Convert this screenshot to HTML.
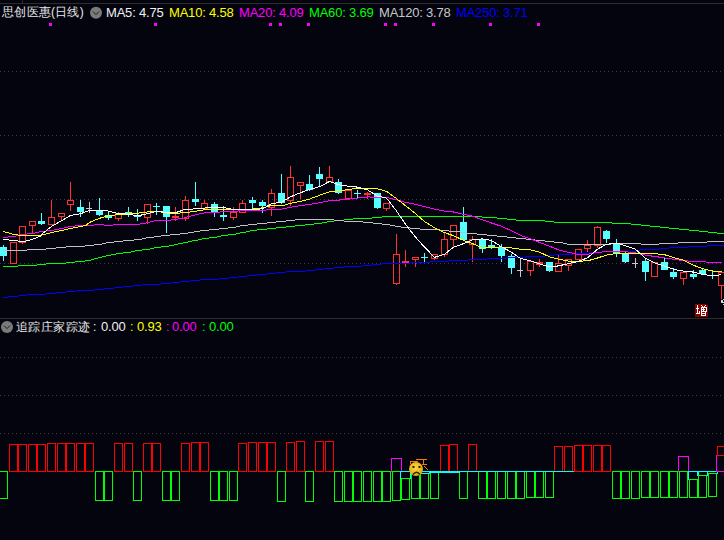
<!DOCTYPE html>
<html><head><meta charset="utf-8"><style>
html,body{margin:0;padding:0;background:#04040e;width:724px;height:540px;overflow:hidden;}
body{position:relative;font-family:"Liberation Sans",sans-serif;}
svg{position:absolute;left:0;top:0;}
.t{position:absolute;white-space:nowrap;font-size:13px;line-height:14px;letter-spacing:-0.2px}
.ic{position:absolute;width:12px;height:12px;border-radius:50%;background:#6c6c6c;}
</style></head><body>
<svg width="724" height="540" shape-rendering="crispEdges">
<rect x="0" y="3" width="724" height="1" fill="#2c2c2c"/>
<rect x="22" y="0" width="1" height="3" fill="#2c2c2c"/>
<rect x="0" y="318" width="724" height="1" fill="#2e2e2e"/>
<rect x="49" y="23" width="3" height="3" fill="#ff00ff"/><rect x="154" y="23" width="3" height="3" fill="#ff00ff"/><rect x="269" y="23" width="3" height="3" fill="#ff00ff"/><rect x="279" y="23" width="3" height="3" fill="#ff00ff"/><rect x="307" y="23" width="3" height="3" fill="#ff00ff"/><rect x="384" y="23" width="3" height="3" fill="#ff00ff"/><rect x="394" y="23" width="3" height="3" fill="#ff00ff"/><rect x="432" y="23" width="3" height="3" fill="#ff00ff"/><rect x="489" y="23" width="3" height="3" fill="#ff00ff"/><rect x="537" y="23" width="3" height="3" fill="#ff00ff"/>
<line x1="0" y1="71.5" x2="724" y2="71.5" stroke="#3c3c3c" stroke-width="1" stroke-dasharray="1 3"/>
<line x1="0" y1="135.5" x2="724" y2="135.5" stroke="#3c3c3c" stroke-width="1" stroke-dasharray="1 3"/>
<line x1="0" y1="199.5" x2="724" y2="199.5" stroke="#3c3c3c" stroke-width="1" stroke-dasharray="1 3"/>
<line x1="0" y1="263.5" x2="724" y2="263.5" stroke="#3c3c3c" stroke-width="1" stroke-dasharray="1 3"/>
<line x1="0" y1="357.5" x2="724" y2="357.5" stroke="#3c3c3c" stroke-width="1" stroke-dasharray="1 3"/>
<line x1="0" y1="395.5" x2="724" y2="395.5" stroke="#3c3c3c" stroke-width="1" stroke-dasharray="1 3"/>
<line x1="0" y1="433.5" x2="724" y2="433.5" stroke="#3c3c3c" stroke-width="1" stroke-dasharray="1 3"/>
<rect x="0" y="247" width="7" height="9" fill="#54ffff"/>
<rect x="3" y="245" width="1" height="16" fill="#54ffff"/>
<rect x="10" y="242" width="7" height="1" fill="#ff3232"/>
<rect x="10" y="263" width="7" height="1" fill="#ff3232"/>
<rect x="10" y="242" width="1" height="22" fill="#ff3232"/>
<rect x="16" y="242" width="1" height="22" fill="#ff3232"/>
<rect x="19" y="226" width="7" height="1" fill="#ff3232"/>
<rect x="19" y="242" width="7" height="1" fill="#ff3232"/>
<rect x="19" y="226" width="1" height="17" fill="#ff3232"/>
<rect x="25" y="226" width="1" height="17" fill="#ff3232"/>
<rect x="22" y="243" width="1" height="1" fill="#ff3232"/>
<rect x="29" y="221" width="7" height="1" fill="#ff3232"/>
<rect x="29" y="225" width="7" height="1" fill="#ff3232"/>
<rect x="29" y="221" width="1" height="5" fill="#ff3232"/>
<rect x="35" y="221" width="1" height="5" fill="#ff3232"/>
<rect x="32" y="226" width="1" height="7" fill="#ff3232"/>
<rect x="38" y="221" width="7" height="3" fill="#54ffff"/>
<rect x="41" y="213" width="1" height="12" fill="#54ffff"/>
<rect x="48" y="217" width="7" height="1" fill="#ff3232"/>
<rect x="48" y="224" width="7" height="1" fill="#ff3232"/>
<rect x="48" y="217" width="1" height="8" fill="#ff3232"/>
<rect x="54" y="217" width="1" height="8" fill="#ff3232"/>
<rect x="51" y="200" width="1" height="17" fill="#ff3232"/>
<rect x="58" y="213" width="7" height="1" fill="#ff3232"/>
<rect x="58" y="216" width="7" height="1" fill="#ff3232"/>
<rect x="58" y="213" width="1" height="4" fill="#ff3232"/>
<rect x="64" y="213" width="1" height="4" fill="#ff3232"/>
<rect x="61" y="217" width="1" height="4" fill="#ff3232"/>
<rect x="67" y="200" width="7" height="1" fill="#ff3232"/>
<rect x="67" y="204" width="7" height="1" fill="#ff3232"/>
<rect x="67" y="200" width="1" height="5" fill="#ff3232"/>
<rect x="73" y="200" width="1" height="5" fill="#ff3232"/>
<rect x="70" y="182" width="1" height="18" fill="#ff3232"/>
<rect x="70" y="205" width="1" height="6" fill="#ff3232"/>
<rect x="77" y="207" width="7" height="5" fill="#54ffff"/>
<rect x="80" y="200" width="1" height="17" fill="#54ffff"/>
<rect x="86" y="208" width="6" height="1" fill="#c8c8c8"/>
<rect x="89" y="202" width="1" height="11" fill="#c8c8c8"/>
<rect x="96" y="210" width="7" height="5" fill="#54ffff"/>
<rect x="99" y="198" width="1" height="18" fill="#54ffff"/>
<rect x="105" y="215" width="7" height="3" fill="#54ffff"/>
<rect x="108" y="212" width="1" height="8" fill="#54ffff"/>
<rect x="115" y="213" width="7" height="1" fill="#ff3232"/>
<rect x="115" y="218" width="7" height="1" fill="#ff3232"/>
<rect x="115" y="213" width="1" height="6" fill="#ff3232"/>
<rect x="121" y="213" width="1" height="6" fill="#ff3232"/>
<rect x="118" y="212" width="1" height="1" fill="#ff3232"/>
<rect x="118" y="219" width="1" height="2" fill="#ff3232"/>
<rect x="125" y="212" width="7" height="2" fill="#54ffff"/>
<rect x="128" y="207" width="1" height="10" fill="#54ffff"/>
<rect x="134" y="215" width="7" height="2" fill="#54ffff"/>
<rect x="137" y="209" width="1" height="12" fill="#54ffff"/>
<rect x="144" y="204" width="7" height="1" fill="#ff3232"/>
<rect x="144" y="217" width="7" height="1" fill="#ff3232"/>
<rect x="144" y="204" width="1" height="14" fill="#ff3232"/>
<rect x="150" y="204" width="1" height="14" fill="#ff3232"/>
<rect x="147" y="218" width="1" height="6" fill="#ff3232"/>
<rect x="153" y="206" width="7" height="1" fill="#54ffff"/>
<rect x="156" y="203" width="1" height="12" fill="#54ffff"/>
<rect x="163" y="206" width="7" height="11" fill="#54ffff"/>
<rect x="166" y="206" width="1" height="27" fill="#54ffff"/>
<rect x="172" y="216" width="7" height="2" fill="#ff3232"/>
<rect x="175" y="207" width="1" height="14" fill="#ff3232"/>
<rect x="182" y="200" width="7" height="1" fill="#ff3232"/>
<rect x="182" y="218" width="7" height="1" fill="#ff3232"/>
<rect x="182" y="200" width="1" height="19" fill="#ff3232"/>
<rect x="188" y="200" width="1" height="19" fill="#ff3232"/>
<rect x="185" y="196" width="1" height="4" fill="#ff3232"/>
<rect x="185" y="219" width="1" height="2" fill="#ff3232"/>
<rect x="192" y="199" width="7" height="3" fill="#54ffff"/>
<rect x="195" y="182" width="1" height="24" fill="#54ffff"/>
<rect x="201" y="203" width="7" height="1" fill="#ff3232"/>
<rect x="201" y="208" width="7" height="1" fill="#ff3232"/>
<rect x="201" y="203" width="1" height="6" fill="#ff3232"/>
<rect x="207" y="203" width="1" height="6" fill="#ff3232"/>
<rect x="204" y="200" width="1" height="3" fill="#ff3232"/>
<rect x="211" y="204" width="7" height="8" fill="#54ffff"/>
<rect x="214" y="202" width="1" height="15" fill="#54ffff"/>
<rect x="220" y="215" width="7" height="2" fill="#54ffff"/>
<rect x="223" y="206" width="1" height="15" fill="#54ffff"/>
<rect x="230" y="212" width="7" height="1" fill="#ff3232"/>
<rect x="230" y="217" width="7" height="1" fill="#ff3232"/>
<rect x="230" y="212" width="1" height="6" fill="#ff3232"/>
<rect x="236" y="212" width="1" height="6" fill="#ff3232"/>
<rect x="233" y="207" width="1" height="5" fill="#ff3232"/>
<rect x="233" y="218" width="1" height="2" fill="#ff3232"/>
<rect x="239" y="203" width="7" height="1" fill="#ff3232"/>
<rect x="239" y="212" width="7" height="1" fill="#ff3232"/>
<rect x="239" y="203" width="1" height="10" fill="#ff3232"/>
<rect x="245" y="203" width="1" height="10" fill="#ff3232"/>
<rect x="242" y="200" width="1" height="3" fill="#ff3232"/>
<rect x="249" y="200" width="7" height="3" fill="#54ffff"/>
<rect x="252" y="197" width="1" height="11" fill="#54ffff"/>
<rect x="259" y="202" width="7" height="4" fill="#54ffff"/>
<rect x="262" y="200" width="1" height="13" fill="#54ffff"/>
<rect x="268" y="193" width="7" height="1" fill="#ff3232"/>
<rect x="268" y="207" width="7" height="1" fill="#ff3232"/>
<rect x="268" y="193" width="1" height="15" fill="#ff3232"/>
<rect x="274" y="193" width="1" height="15" fill="#ff3232"/>
<rect x="271" y="189" width="1" height="4" fill="#ff3232"/>
<rect x="271" y="208" width="1" height="8" fill="#ff3232"/>
<rect x="278" y="193" width="7" height="10" fill="#54ffff"/>
<rect x="281" y="174" width="1" height="30" fill="#54ffff"/>
<rect x="287" y="177" width="7" height="1" fill="#ff3232"/>
<rect x="287" y="200" width="7" height="1" fill="#ff3232"/>
<rect x="287" y="177" width="1" height="24" fill="#ff3232"/>
<rect x="293" y="177" width="1" height="24" fill="#ff3232"/>
<rect x="290" y="166" width="1" height="11" fill="#ff3232"/>
<rect x="290" y="201" width="1" height="5" fill="#ff3232"/>
<rect x="297" y="182" width="7" height="1" fill="#ff3232"/>
<rect x="297" y="185" width="7" height="1" fill="#ff3232"/>
<rect x="297" y="182" width="1" height="4" fill="#ff3232"/>
<rect x="303" y="182" width="1" height="4" fill="#ff3232"/>
<rect x="300" y="186" width="1" height="13" fill="#ff3232"/>
<rect x="306" y="184" width="7" height="6" fill="#54ffff"/>
<rect x="309" y="175" width="1" height="16" fill="#54ffff"/>
<rect x="316" y="174" width="7" height="5" fill="#54ffff"/>
<rect x="319" y="167" width="1" height="19" fill="#54ffff"/>
<rect x="326" y="177" width="7" height="1" fill="#ff3232"/>
<rect x="326" y="181" width="7" height="1" fill="#ff3232"/>
<rect x="326" y="177" width="1" height="5" fill="#ff3232"/>
<rect x="332" y="177" width="1" height="5" fill="#ff3232"/>
<rect x="329" y="166" width="1" height="11" fill="#ff3232"/>
<rect x="335" y="182" width="7" height="11" fill="#54ffff"/>
<rect x="338" y="179" width="1" height="15" fill="#54ffff"/>
<rect x="345" y="190" width="7" height="1" fill="#ff3232"/>
<rect x="345" y="198" width="7" height="1" fill="#ff3232"/>
<rect x="345" y="190" width="1" height="9" fill="#ff3232"/>
<rect x="351" y="190" width="1" height="9" fill="#ff3232"/>
<rect x="354" y="193" width="7" height="1" fill="#54ffff"/>
<rect x="357" y="190" width="1" height="8" fill="#54ffff"/>
<rect x="364" y="193" width="7" height="2" fill="#ff3232"/>
<rect x="367" y="192" width="1" height="7" fill="#ff3232"/>
<rect x="374" y="193" width="7" height="15" fill="#54ffff"/>
<rect x="377" y="193" width="1" height="16" fill="#54ffff"/>
<rect x="383" y="203" width="7" height="1" fill="#ff3232"/>
<rect x="383" y="208" width="7" height="1" fill="#ff3232"/>
<rect x="383" y="203" width="1" height="6" fill="#ff3232"/>
<rect x="389" y="203" width="1" height="6" fill="#ff3232"/>
<rect x="386" y="209" width="1" height="2" fill="#ff3232"/>
<rect x="393" y="254" width="7" height="1" fill="#ff3232"/>
<rect x="393" y="283" width="7" height="1" fill="#ff3232"/>
<rect x="393" y="254" width="1" height="30" fill="#ff3232"/>
<rect x="399" y="254" width="1" height="30" fill="#ff3232"/>
<rect x="396" y="234" width="1" height="20" fill="#ff3232"/>
<rect x="396" y="284" width="1" height="1" fill="#ff3232"/>
<rect x="402" y="261" width="7" height="3" fill="#ff3232"/>
<rect x="405" y="250" width="1" height="17" fill="#ff3232"/>
<rect x="412" y="257" width="7" height="1" fill="#ff3232"/>
<rect x="412" y="259" width="7" height="1" fill="#ff3232"/>
<rect x="412" y="257" width="1" height="3" fill="#ff3232"/>
<rect x="418" y="257" width="1" height="3" fill="#ff3232"/>
<rect x="415" y="260" width="1" height="7" fill="#ff3232"/>
<rect x="421" y="257" width="7" height="1" fill="#54ffff"/>
<rect x="424" y="253" width="1" height="9" fill="#54ffff"/>
<rect x="431" y="254" width="7" height="1" fill="#ff3232"/>
<rect x="431" y="258" width="7" height="1" fill="#ff3232"/>
<rect x="431" y="254" width="1" height="5" fill="#ff3232"/>
<rect x="437" y="254" width="1" height="5" fill="#ff3232"/>
<rect x="434" y="259" width="1" height="1" fill="#ff3232"/>
<rect x="441" y="239" width="7" height="1" fill="#ff3232"/>
<rect x="441" y="254" width="7" height="1" fill="#ff3232"/>
<rect x="441" y="239" width="1" height="16" fill="#ff3232"/>
<rect x="447" y="239" width="1" height="16" fill="#ff3232"/>
<rect x="444" y="233" width="1" height="6" fill="#ff3232"/>
<rect x="444" y="255" width="1" height="2" fill="#ff3232"/>
<rect x="450" y="225" width="7" height="1" fill="#ff3232"/>
<rect x="450" y="239" width="7" height="1" fill="#ff3232"/>
<rect x="450" y="225" width="1" height="15" fill="#ff3232"/>
<rect x="456" y="225" width="1" height="15" fill="#ff3232"/>
<rect x="453" y="240" width="1" height="7" fill="#ff3232"/>
<rect x="460" y="222" width="7" height="18" fill="#54ffff"/>
<rect x="463" y="207" width="1" height="34" fill="#54ffff"/>
<rect x="469" y="239" width="7" height="1" fill="#ff3232"/>
<rect x="469" y="244" width="7" height="1" fill="#ff3232"/>
<rect x="469" y="239" width="1" height="6" fill="#ff3232"/>
<rect x="475" y="239" width="1" height="6" fill="#ff3232"/>
<rect x="472" y="236" width="1" height="3" fill="#ff3232"/>
<rect x="472" y="245" width="1" height="17" fill="#ff3232"/>
<rect x="479" y="239" width="7" height="10" fill="#54ffff"/>
<rect x="482" y="239" width="1" height="14" fill="#54ffff"/>
<rect x="488" y="245" width="7" height="2" fill="#54ffff"/>
<rect x="491" y="239" width="1" height="10" fill="#54ffff"/>
<rect x="498" y="247" width="7" height="9" fill="#54ffff"/>
<rect x="501" y="244" width="1" height="18" fill="#54ffff"/>
<rect x="508" y="256" width="7" height="12" fill="#54ffff"/>
<rect x="511" y="254" width="1" height="20" fill="#54ffff"/>
<rect x="517" y="270" width="6" height="1" fill="#c8c8c8"/>
<rect x="520" y="258" width="1" height="19" fill="#c8c8c8"/>
<rect x="527" y="261" width="7" height="1" fill="#ff3232"/>
<rect x="527" y="270" width="7" height="1" fill="#ff3232"/>
<rect x="527" y="261" width="1" height="10" fill="#ff3232"/>
<rect x="533" y="261" width="1" height="10" fill="#ff3232"/>
<rect x="530" y="271" width="1" height="5" fill="#ff3232"/>
<rect x="536" y="262" width="7" height="3" fill="#ff3232"/>
<rect x="539" y="259" width="1" height="8" fill="#ff3232"/>
<rect x="546" y="262" width="7" height="9" fill="#54ffff"/>
<rect x="549" y="262" width="1" height="10" fill="#54ffff"/>
<rect x="555" y="263" width="7" height="1" fill="#ff3232"/>
<rect x="555" y="271" width="7" height="1" fill="#ff3232"/>
<rect x="555" y="263" width="1" height="9" fill="#ff3232"/>
<rect x="561" y="263" width="1" height="9" fill="#ff3232"/>
<rect x="558" y="255" width="1" height="8" fill="#ff3232"/>
<rect x="565" y="259" width="7" height="1" fill="#ff3232"/>
<rect x="565" y="265" width="7" height="1" fill="#ff3232"/>
<rect x="565" y="259" width="1" height="7" fill="#ff3232"/>
<rect x="571" y="259" width="1" height="7" fill="#ff3232"/>
<rect x="568" y="266" width="1" height="5" fill="#ff3232"/>
<rect x="575" y="249" width="7" height="1" fill="#ff3232"/>
<rect x="575" y="259" width="7" height="1" fill="#ff3232"/>
<rect x="575" y="249" width="1" height="11" fill="#ff3232"/>
<rect x="581" y="249" width="1" height="11" fill="#ff3232"/>
<rect x="584" y="245" width="7" height="1" fill="#ff3232"/>
<rect x="584" y="248" width="7" height="1" fill="#ff3232"/>
<rect x="584" y="245" width="1" height="4" fill="#ff3232"/>
<rect x="590" y="245" width="1" height="4" fill="#ff3232"/>
<rect x="587" y="240" width="1" height="5" fill="#ff3232"/>
<rect x="587" y="249" width="1" height="3" fill="#ff3232"/>
<rect x="594" y="227" width="7" height="1" fill="#ff3232"/>
<rect x="594" y="245" width="7" height="1" fill="#ff3232"/>
<rect x="594" y="227" width="1" height="19" fill="#ff3232"/>
<rect x="600" y="227" width="1" height="19" fill="#ff3232"/>
<rect x="597" y="226" width="1" height="1" fill="#ff3232"/>
<rect x="597" y="246" width="1" height="2" fill="#ff3232"/>
<rect x="603" y="231" width="7" height="8" fill="#54ffff"/>
<rect x="606" y="230" width="1" height="13" fill="#54ffff"/>
<rect x="613" y="244" width="7" height="9" fill="#54ffff"/>
<rect x="616" y="239" width="1" height="18" fill="#54ffff"/>
<rect x="622" y="254" width="7" height="8" fill="#54ffff"/>
<rect x="625" y="252" width="1" height="11" fill="#54ffff"/>
<rect x="632" y="263" width="6" height="1" fill="#c8c8c8"/>
<rect x="635" y="258" width="1" height="10" fill="#c8c8c8"/>
<rect x="642" y="261" width="7" height="11" fill="#54ffff"/>
<rect x="645" y="259" width="1" height="22" fill="#54ffff"/>
<rect x="651" y="262" width="7" height="1" fill="#ff3232"/>
<rect x="651" y="276" width="7" height="1" fill="#ff3232"/>
<rect x="651" y="262" width="1" height="15" fill="#ff3232"/>
<rect x="657" y="262" width="1" height="15" fill="#ff3232"/>
<rect x="661" y="262" width="7" height="8" fill="#54ffff"/>
<rect x="664" y="258" width="1" height="12" fill="#54ffff"/>
<rect x="670" y="272" width="7" height="5" fill="#54ffff"/>
<rect x="673" y="268" width="1" height="11" fill="#54ffff"/>
<rect x="680" y="272" width="7" height="1" fill="#ff3232"/>
<rect x="680" y="278" width="7" height="1" fill="#ff3232"/>
<rect x="680" y="272" width="1" height="7" fill="#ff3232"/>
<rect x="686" y="272" width="1" height="7" fill="#ff3232"/>
<rect x="683" y="279" width="1" height="6" fill="#ff3232"/>
<rect x="690" y="274" width="7" height="3" fill="#54ffff"/>
<rect x="693" y="270" width="1" height="9" fill="#54ffff"/>
<rect x="699" y="270" width="7" height="4" fill="#54ffff"/>
<rect x="702" y="268" width="1" height="6" fill="#54ffff"/>
<rect x="709" y="275" width="7" height="1" fill="#54ffff"/>
<rect x="712" y="271" width="1" height="8" fill="#54ffff"/>
<rect x="718" y="272" width="7" height="1" fill="#ff3232"/>
<rect x="718" y="285" width="7" height="1" fill="#ff3232"/>
<rect x="718" y="272" width="1" height="14" fill="#ff3232"/>
<rect x="724" y="272" width="1" height="14" fill="#ff3232"/>
<rect x="721" y="286" width="1" height="13" fill="#ff3232"/>
</svg>
<svg width="724" height="540" shape-rendering="crispEdges">
<g fill="#0000ff"><rect x="3" y="297" width="5" height="1"/><rect x="8" y="296" width="10" height="1"/><rect x="18" y="295" width="9" height="1"/><rect x="27" y="294" width="19" height="1"/><rect x="46" y="293" width="10" height="1"/><rect x="56" y="292" width="10" height="1"/><rect x="66" y="291" width="10" height="1"/><rect x="76" y="290" width="18" height="1"/><rect x="94" y="289" width="10" height="1"/><rect x="104" y="288" width="10" height="1"/><rect x="114" y="287" width="9" height="1"/><rect x="123" y="286" width="10" height="1"/><rect x="133" y="285" width="9" height="1"/><rect x="142" y="284" width="19" height="1"/><rect x="161" y="283" width="10" height="1"/><rect x="171" y="282" width="9" height="1"/><rect x="180" y="281" width="10" height="1"/><rect x="190" y="280" width="10" height="1"/><rect x="200" y="279" width="19" height="1"/><rect x="219" y="278" width="10" height="1"/><rect x="229" y="277" width="9" height="1"/><rect x="238" y="276" width="9" height="1"/><rect x="247" y="275" width="10" height="1"/><rect x="257" y="274" width="10" height="1"/><rect x="267" y="273" width="9" height="1"/><rect x="276" y="272" width="10" height="1"/><rect x="286" y="271" width="20" height="1"/><rect x="306" y="270" width="9" height="1"/><rect x="315" y="269" width="9" height="1"/><rect x="324" y="268" width="10" height="1"/><rect x="334" y="267" width="10" height="1"/><rect x="344" y="266" width="18" height="1"/><rect x="362" y="265" width="10" height="1"/><rect x="372" y="264" width="10" height="1"/><rect x="382" y="263" width="28" height="1"/><rect x="410" y="262" width="20" height="1"/><rect x="430" y="261" width="19" height="1"/><rect x="449" y="260" width="19" height="1"/><rect x="468" y="259" width="19" height="1"/><rect x="487" y="258" width="19" height="1"/><rect x="506" y="257" width="20" height="1"/><rect x="526" y="256" width="19" height="1"/><rect x="545" y="255" width="9" height="1"/><rect x="554" y="254" width="19" height="1"/><rect x="573" y="253" width="18" height="1"/><rect x="591" y="252" width="11" height="1"/><rect x="602" y="251" width="34" height="1"/><rect x="636" y="250" width="4" height="1"/><rect x="640" y="249" width="19" height="1"/><rect x="659" y="248" width="10" height="1"/><rect x="669" y="247" width="19" height="1"/><rect x="688" y="246" width="19" height="1"/><rect x="707" y="245" width="17" height="1"/></g>
<g fill="#00ff00"><rect x="3" y="266" width="15" height="1"/><rect x="18" y="265" width="19" height="1"/><rect x="37" y="264" width="9" height="1"/><rect x="46" y="263" width="20" height="1"/><rect x="66" y="262" width="9" height="1"/><rect x="75" y="261" width="10" height="1"/><rect x="85" y="260" width="6" height="1"/><rect x="91" y="259" width="3" height="1"/><rect x="94" y="258" width="4" height="1"/><rect x="98" y="257" width="4" height="1"/><rect x="102" y="256" width="4" height="1"/><rect x="106" y="255" width="5" height="1"/><rect x="111" y="254" width="5" height="1"/><rect x="116" y="253" width="7" height="1"/><rect x="123" y="252" width="8" height="1"/><rect x="131" y="251" width="4" height="1"/><rect x="135" y="250" width="7" height="1"/><rect x="142" y="249" width="8" height="1"/><rect x="150" y="248" width="4" height="1"/><rect x="154" y="247" width="7" height="1"/><rect x="161" y="246" width="8" height="1"/><rect x="169" y="245" width="5" height="1"/><rect x="174" y="244" width="4" height="1"/><rect x="178" y="243" width="5" height="1"/><rect x="183" y="242" width="5" height="1"/><rect x="188" y="241" width="4" height="1"/><rect x="192" y="240" width="6" height="1"/><rect x="198" y="239" width="4" height="1"/><rect x="202" y="238" width="7" height="1"/><rect x="209" y="237" width="8" height="1"/><rect x="217" y="236" width="4" height="1"/><rect x="221" y="235" width="7" height="1"/><rect x="228" y="234" width="8" height="1"/><rect x="236" y="233" width="4" height="1"/><rect x="240" y="232" width="6" height="1"/><rect x="246" y="231" width="4" height="1"/><rect x="250" y="230" width="7" height="1"/><rect x="257" y="229" width="10" height="1"/><rect x="267" y="228" width="9" height="1"/><rect x="276" y="227" width="10" height="1"/><rect x="286" y="226" width="9" height="1"/><rect x="295" y="225" width="10" height="1"/><rect x="305" y="224" width="9" height="1"/><rect x="314" y="223" width="8" height="1"/><rect x="322" y="222" width="5" height="1"/><rect x="327" y="221" width="7" height="1"/><rect x="334" y="220" width="10" height="1"/><rect x="344" y="219" width="9" height="1"/><rect x="353" y="218" width="19" height="1"/><rect x="372" y="217" width="10" height="1"/><rect x="382" y="216" width="100" height="1"/><rect x="482" y="217" width="15" height="1"/><rect x="497" y="218" width="10" height="1"/><rect x="507" y="219" width="9" height="1"/><rect x="516" y="220" width="29" height="1"/><rect x="545" y="221" width="9" height="1"/><rect x="554" y="222" width="58" height="1"/><rect x="612" y="223" width="19" height="1"/><rect x="631" y="224" width="10" height="1"/><rect x="641" y="225" width="9" height="1"/><rect x="650" y="226" width="10" height="1"/><rect x="660" y="227" width="9" height="1"/><rect x="669" y="228" width="10" height="1"/><rect x="679" y="229" width="10" height="1"/><rect x="689" y="230" width="10" height="1"/><rect x="699" y="231" width="9" height="1"/><rect x="708" y="232" width="9" height="1"/><rect x="717" y="233" width="7" height="1"/></g>
<g fill="#c0c0c0"><rect x="3" y="250" width="24" height="1"/><rect x="27" y="249" width="19" height="1"/><rect x="46" y="248" width="10" height="1"/><rect x="56" y="247" width="10" height="1"/><rect x="66" y="246" width="19" height="1"/><rect x="85" y="245" width="9" height="1"/><rect x="94" y="244" width="8" height="1"/><rect x="102" y="243" width="4" height="1"/><rect x="106" y="242" width="8" height="1"/><rect x="114" y="241" width="9" height="1"/><rect x="123" y="240" width="11" height="1"/><rect x="134" y="239" width="8" height="1"/><rect x="142" y="238" width="4" height="1"/><rect x="146" y="237" width="8" height="1"/><rect x="154" y="236" width="7" height="1"/><rect x="161" y="235" width="9" height="1"/><rect x="170" y="234" width="10" height="1"/><rect x="180" y="233" width="8" height="1"/><rect x="188" y="232" width="6" height="1"/><rect x="194" y="231" width="6" height="1"/><rect x="200" y="230" width="9" height="1"/><rect x="209" y="229" width="10" height="1"/><rect x="219" y="228" width="9" height="1"/><rect x="228" y="227" width="8" height="1"/><rect x="236" y="226" width="4" height="1"/><rect x="240" y="225" width="8" height="1"/><rect x="248" y="224" width="9" height="1"/><rect x="257" y="223" width="10" height="1"/><rect x="267" y="222" width="9" height="1"/><rect x="276" y="221" width="10" height="1"/><rect x="286" y="220" width="9" height="1"/><rect x="295" y="219" width="39" height="1"/><rect x="334" y="220" width="10" height="1"/><rect x="344" y="221" width="19" height="1"/><rect x="363" y="222" width="10" height="1"/><rect x="373" y="223" width="9" height="1"/><rect x="382" y="224" width="8" height="1"/><rect x="390" y="225" width="5" height="1"/><rect x="395" y="226" width="6" height="1"/><rect x="401" y="227" width="9" height="1"/><rect x="410" y="228" width="10" height="1"/><rect x="420" y="229" width="20" height="1"/><rect x="440" y="230" width="9" height="1"/><rect x="449" y="231" width="11" height="1"/><rect x="460" y="232" width="7" height="1"/><rect x="467" y="233" width="10" height="1"/><rect x="477" y="234" width="10" height="1"/><rect x="487" y="235" width="10" height="1"/><rect x="497" y="236" width="10" height="1"/><rect x="507" y="237" width="9" height="1"/><rect x="516" y="238" width="10" height="1"/><rect x="526" y="239" width="9" height="1"/><rect x="535" y="240" width="10" height="1"/><rect x="545" y="241" width="9" height="1"/><rect x="554" y="242" width="9" height="1"/><rect x="563" y="243" width="4" height="1"/><rect x="567" y="244" width="44" height="1"/><rect x="611" y="243" width="30" height="1"/><rect x="641" y="244" width="18" height="1"/><rect x="659" y="243" width="19" height="1"/><rect x="678" y="242" width="29" height="1"/><rect x="707" y="241" width="17" height="1"/></g>
<g fill="#ff00ff"><rect x="3" y="237" width="5" height="1"/><rect x="8" y="236" width="8" height="1"/><rect x="16" y="235" width="4" height="1"/><rect x="20" y="234" width="7" height="1"/><rect x="27" y="233" width="8" height="1"/><rect x="35" y="232" width="4" height="1"/><rect x="39" y="231" width="7" height="1"/><rect x="46" y="230" width="8" height="1"/><rect x="54" y="229" width="5" height="1"/><rect x="59" y="228" width="5" height="1"/><rect x="64" y="227" width="4" height="1"/><rect x="68" y="226" width="7" height="1"/><rect x="75" y="225" width="19" height="1"/><rect x="94" y="224" width="10" height="1"/><rect x="104" y="225" width="9" height="1"/><rect x="113" y="224" width="27" height="1"/><rect x="140" y="223" width="6" height="1"/><rect x="146" y="222" width="4" height="1"/><rect x="150" y="221" width="4" height="1"/><rect x="154" y="220" width="17" height="1"/><rect x="171" y="219" width="7" height="1"/><rect x="178" y="218" width="5" height="1"/></g>
<polyline points="183.0,218.5 185.5,217.5 195.5,214.8 204.5,212.8 214.5,212.2 223.5,211.9 233.5,211.3 242.5,210.7 252.5,210.2 262.5,210.4 271.5,209.5 281.5,209.2 290.5,207.3 300.5,205.6 309.5,204.4 319.5,202.7 329.5,200.7 338.5,200.1 348.5,199.2 357.5,198.1 367.5,196.9 377.5,197.3 386.5,197.4 396.5,199.9 405.5,202.4 415.5,204.4 424.5,206.7 434.5,209.2 444.5,211.1 453.5,212.0 463.5,214.3 472.5,216.2 482.5,219.8 491.5,223.0 501.5,226.3 511.5,230.8 520.5,235.4 530.5,238.8 539.5,242.4 549.5,246.2 558.5,249.8 568.5,252.3 578.5,254.6 587.5,254.2 597.5,252.4 606.5,251.6 616.5,251.3 625.5,251.7 635.5,252.9 645.5,255.2 654.5,256.4 664.5,257.9 673.5,259.3 683.5,260.6 693.5,261.6 702.5,261.9 712.5,262.2 721.5,262.8" fill="none" stroke="#ff00ff" stroke-width="1"/>
<g fill="#ffff00"><rect x="3" y="231" width="2" height="1"/><rect x="5" y="232" width="4" height="1"/><rect x="9" y="233" width="3" height="1"/><rect x="12" y="234" width="6" height="1"/><rect x="18" y="235" width="24" height="1"/><rect x="42" y="234" width="4" height="1"/><rect x="46" y="233" width="4" height="1"/><rect x="50" y="232" width="4" height="1"/><rect x="54" y="231" width="5" height="1"/><rect x="59" y="230" width="5" height="1"/><rect x="64" y="229" width="4" height="1"/><rect x="68" y="228" width="5" height="1"/><rect x="73" y="227" width="5" height="1"/><rect x="78" y="226" width="5" height="1"/><rect x="83" y="225" width="3" height="1"/></g>
<polyline points="86.0,225.5 89.5,222.4 99.5,218.3 108.5,215.9 118.5,214.6 128.5,213.9 137.5,213.2 147.5,211.9 156.5,211.3 166.5,213.0 175.5,213.4 185.5,212.6 195.5,211.3 204.5,209.8 214.5,209.7 223.5,210.0 233.5,209.5 242.5,209.4 252.5,209.0 262.5,207.9 271.5,205.6 281.5,205.9 290.5,203.4 300.5,201.3 309.5,199.1 319.5,195.3 329.5,191.8 338.5,190.8 348.5,189.5 357.5,188.3 367.5,188.3 377.5,188.8 386.5,191.4 396.5,198.6 405.5,205.7 415.5,213.5 424.5,221.6 434.5,227.7 444.5,232.6 453.5,235.7 463.5,240.4 472.5,243.5 482.5,248.1 491.5,247.4 501.5,246.9 511.5,248.0 520.5,249.2 530.5,249.9 539.5,252.2 549.5,256.8 558.5,259.1 568.5,261.1 578.5,261.1 587.5,260.9 597.5,258.0 606.5,255.1 616.5,253.4 625.5,253.5 635.5,253.6 645.5,253.7 654.5,253.6 664.5,254.7 673.5,257.5 683.5,260.2 693.5,265.2 702.5,268.7 712.5,271.0 721.5,272.0" fill="none" stroke="#ffff00" stroke-width="1"/>
<g fill="#ffffff"><rect x="3" y="239" width="6" height="1"/><rect x="9" y="240" width="9" height="1"/><rect x="18" y="241" width="8" height="1"/><rect x="26" y="240" width="4" height="1"/><rect x="30" y="239" width="3" height="1"/><rect x="33" y="238" width="3" height="1"/><rect x="36" y="237" width="2" height="1"/><rect x="38" y="236" width="2" height="1"/></g>
<polyline points="40.0,236.5 41.5,234.3 51.5,226.5 61.5,220.7 70.5,215.5 80.5,213.7 89.5,210.5 99.5,210.1 108.5,211.1 118.5,213.7 128.5,214.1 137.5,215.9 147.5,213.7 156.5,211.5 166.5,212.3 175.5,212.7 185.5,209.3 195.5,208.9 204.5,208.1 214.5,207.1 223.5,207.3 233.5,209.7 242.5,209.9 252.5,209.9 262.5,208.7 271.5,203.9 281.5,202.1 290.5,196.9 300.5,192.7 309.5,189.5 319.5,186.7 329.5,181.5 338.5,184.7 348.5,186.3 357.5,187.1 367.5,189.9 377.5,196.1 386.5,198.1 396.5,210.9 405.5,224.3 415.5,237.1 424.5,247.1 434.5,257.3 444.5,254.3 453.5,247.1 463.5,243.7 472.5,239.9 482.5,238.9 491.5,240.5 501.5,246.7 511.5,252.3 520.5,258.5 530.5,260.9 539.5,263.9 549.5,266.9 558.5,265.9 568.5,263.7 578.5,261.3 587.5,257.9 597.5,249.1 606.5,244.3 616.5,243.1 625.5,245.7 635.5,249.3 645.5,258.3 654.5,262.9 664.5,266.3 673.5,269.3 683.5,271.1 693.5,272.1 702.5,274.5 712.5,275.7 721.5,274.7" fill="none" stroke="#ffffff" stroke-width="1"/>
<rect x="9.5" y="444.5" width="8" height="27" fill="none" stroke="#ff0000" stroke-width="1"/>
<rect x="18.5" y="444.5" width="8" height="27" fill="none" stroke="#ff0000" stroke-width="1"/>
<rect x="28.5" y="444.5" width="8" height="27" fill="none" stroke="#ff0000" stroke-width="1"/>
<rect x="37.5" y="444.5" width="8" height="27" fill="none" stroke="#ff0000" stroke-width="1"/>
<rect x="47.5" y="443.5" width="8" height="28" fill="none" stroke="#ff0000" stroke-width="1"/>
<rect x="57.5" y="443.5" width="8" height="28" fill="none" stroke="#ff0000" stroke-width="1"/>
<rect x="66.5" y="443.5" width="8" height="28" fill="none" stroke="#ff0000" stroke-width="1"/>
<rect x="76.5" y="443.5" width="8" height="28" fill="none" stroke="#ff0000" stroke-width="1"/>
<rect x="85.5" y="443.5" width="8" height="28" fill="none" stroke="#ff0000" stroke-width="1"/>
<rect x="114.5" y="443.5" width="8" height="28" fill="none" stroke="#ff0000" stroke-width="1"/>
<rect x="124.5" y="443.5" width="8" height="28" fill="none" stroke="#ff0000" stroke-width="1"/>
<rect x="143.5" y="443.5" width="8" height="28" fill="none" stroke="#ff0000" stroke-width="1"/>
<rect x="152.5" y="443.5" width="8" height="28" fill="none" stroke="#ff0000" stroke-width="1"/>
<rect x="181.5" y="443.5" width="8" height="28" fill="none" stroke="#ff0000" stroke-width="1"/>
<rect x="191.5" y="442.5" width="8" height="29" fill="none" stroke="#ff0000" stroke-width="1"/>
<rect x="200.5" y="442.5" width="8" height="29" fill="none" stroke="#ff0000" stroke-width="1"/>
<rect x="238.5" y="443.5" width="8" height="28" fill="none" stroke="#ff0000" stroke-width="1"/>
<rect x="248.5" y="442.5" width="8" height="29" fill="none" stroke="#ff0000" stroke-width="1"/>
<rect x="258.5" y="442.5" width="8" height="29" fill="none" stroke="#ff0000" stroke-width="1"/>
<rect x="267.5" y="442.5" width="8" height="29" fill="none" stroke="#ff0000" stroke-width="1"/>
<rect x="286.5" y="442.5" width="8" height="29" fill="none" stroke="#ff0000" stroke-width="1"/>
<rect x="296.5" y="441.5" width="8" height="30" fill="none" stroke="#ff0000" stroke-width="1"/>
<rect x="315.5" y="441.5" width="8" height="30" fill="none" stroke="#ff0000" stroke-width="1"/>
<rect x="325.5" y="441.5" width="8" height="30" fill="none" stroke="#ff0000" stroke-width="1"/>
<rect x="440.5" y="445.5" width="8" height="26" fill="none" stroke="#ff0000" stroke-width="1"/>
<rect x="449.5" y="444.5" width="8" height="27" fill="none" stroke="#ff0000" stroke-width="1"/>
<rect x="468.5" y="444.5" width="8" height="27" fill="none" stroke="#ff0000" stroke-width="1"/>
<rect x="554.5" y="446.5" width="8" height="25" fill="none" stroke="#ff0000" stroke-width="1"/>
<rect x="564.5" y="446.5" width="8" height="25" fill="none" stroke="#ff0000" stroke-width="1"/>
<rect x="574.5" y="445.5" width="8" height="26" fill="none" stroke="#ff0000" stroke-width="1"/>
<rect x="583.5" y="445.5" width="8" height="26" fill="none" stroke="#ff0000" stroke-width="1"/>
<rect x="593.5" y="445.5" width="8" height="26" fill="none" stroke="#ff0000" stroke-width="1"/>
<rect x="602.5" y="445.5" width="8" height="26" fill="none" stroke="#ff0000" stroke-width="1"/>
<rect x="-0.5" y="471.5" width="8" height="27" fill="none" stroke="#00ff00" stroke-width="1"/>
<rect x="95.5" y="471.5" width="8" height="29" fill="none" stroke="#00ff00" stroke-width="1"/>
<rect x="104.5" y="471.5" width="8" height="29" fill="none" stroke="#00ff00" stroke-width="1"/>
<rect x="133.5" y="471.5" width="8" height="29" fill="none" stroke="#00ff00" stroke-width="1"/>
<rect x="162.5" y="471.5" width="8" height="29" fill="none" stroke="#00ff00" stroke-width="1"/>
<rect x="171.5" y="471.5" width="8" height="29" fill="none" stroke="#00ff00" stroke-width="1"/>
<rect x="210.5" y="471.5" width="8" height="29" fill="none" stroke="#00ff00" stroke-width="1"/>
<rect x="219.5" y="471.5" width="8" height="29" fill="none" stroke="#00ff00" stroke-width="1"/>
<rect x="229.5" y="471.5" width="8" height="29" fill="none" stroke="#00ff00" stroke-width="1"/>
<rect x="277.5" y="471.5" width="8" height="30" fill="none" stroke="#00ff00" stroke-width="1"/>
<rect x="305.5" y="471.5" width="8" height="30" fill="none" stroke="#00ff00" stroke-width="1"/>
<rect x="334.5" y="471.5" width="8" height="30" fill="none" stroke="#00ff00" stroke-width="1"/>
<rect x="344.5" y="471.5" width="8" height="30" fill="none" stroke="#00ff00" stroke-width="1"/>
<rect x="353.5" y="471.5" width="8" height="30" fill="none" stroke="#00ff00" stroke-width="1"/>
<rect x="363.5" y="471.5" width="8" height="30" fill="none" stroke="#00ff00" stroke-width="1"/>
<rect x="373.5" y="471.5" width="8" height="30" fill="none" stroke="#00ff00" stroke-width="1"/>
<rect x="382.5" y="471.5" width="8" height="30" fill="none" stroke="#00ff00" stroke-width="1"/>
<rect x="459.5" y="471.5" width="8" height="27" fill="none" stroke="#00ff00" stroke-width="1"/>
<rect x="478.5" y="471.5" width="8" height="27" fill="none" stroke="#00ff00" stroke-width="1"/>
<rect x="487.5" y="471.5" width="8" height="27" fill="none" stroke="#00ff00" stroke-width="1"/>
<rect x="497.5" y="471.5" width="8" height="27" fill="none" stroke="#00ff00" stroke-width="1"/>
<rect x="507.5" y="471.5" width="8" height="27" fill="none" stroke="#00ff00" stroke-width="1"/>
<rect x="516.5" y="471.5" width="8" height="27" fill="none" stroke="#00ff00" stroke-width="1"/>
<rect x="526.5" y="471.5" width="8" height="26" fill="none" stroke="#00ff00" stroke-width="1"/>
<rect x="535.5" y="471.5" width="8" height="26" fill="none" stroke="#00ff00" stroke-width="1"/>
<rect x="545.5" y="471.5" width="8" height="26" fill="none" stroke="#00ff00" stroke-width="1"/>
<rect x="612.5" y="471.5" width="8" height="27" fill="none" stroke="#00ff00" stroke-width="1"/>
<rect x="621.5" y="471.5" width="8" height="27" fill="none" stroke="#00ff00" stroke-width="1"/>
<rect x="631.5" y="471.5" width="8" height="27" fill="none" stroke="#00ff00" stroke-width="1"/>
<rect x="641.5" y="471.5" width="8" height="26" fill="none" stroke="#00ff00" stroke-width="1"/>
<rect x="650.5" y="471.5" width="8" height="26" fill="none" stroke="#00ff00" stroke-width="1"/>
<rect x="660.5" y="471.5" width="8" height="26" fill="none" stroke="#00ff00" stroke-width="1"/>
<rect x="669.5" y="471.5" width="8" height="26" fill="none" stroke="#00ff00" stroke-width="1"/>
<rect x="391.5" y="458.5" width="10" height="13" fill="none" stroke="#ff00ff" stroke-width="1"/>
<rect x="392.5" y="471.5" width="8" height="29" fill="none" stroke="#00ff00" stroke-width="1"/>
<rect x="400.5" y="471.5" width="10" height="7" fill="none" stroke="#00ffff" stroke-width="1"/>
<rect x="401.5" y="478.5" width="8" height="21" fill="none" stroke="#00ff00" stroke-width="1"/>
<rect x="411.5" y="473.5" width="8" height="25" fill="none" stroke="#00ff00" stroke-width="1"/>
<rect x="411.5" y="471.5" width="9" height="2" fill="none" stroke="#00ffff" stroke-width="1"/>
<rect x="420.5" y="473.5" width="8" height="25" fill="none" stroke="#00ff00" stroke-width="1"/>
<rect x="420.5" y="471.5" width="9" height="2" fill="none" stroke="#00ffff" stroke-width="1"/>
<rect x="430.5" y="471.5" width="8" height="27" fill="none" stroke="#00ff00" stroke-width="1"/>
<rect x="678.5" y="456.5" width="10" height="15" fill="none" stroke="#ff00ff" stroke-width="1"/>
<rect x="679.5" y="471.5" width="8" height="26" fill="none" stroke="#00ff00" stroke-width="1"/>
<rect x="688.5" y="471.5" width="10" height="8" fill="none" stroke="#00ffff" stroke-width="1"/>
<rect x="689.5" y="479.5" width="8" height="18" fill="none" stroke="#00ff00" stroke-width="1"/>
<rect x="697.5" y="471.5" width="10" height="4" fill="none" stroke="#00ffff" stroke-width="1"/>
<rect x="698.5" y="475.5" width="8" height="22" fill="none" stroke="#00ff00" stroke-width="1"/>
<rect x="707.5" y="471.5" width="10" height="2" fill="none" stroke="#00ffff" stroke-width="1"/>
<rect x="708.5" y="473.5" width="8" height="23" fill="none" stroke="#00ff00" stroke-width="1"/>
<rect x="716.5" y="455.5" width="10" height="16" fill="none" stroke="#ff00ff" stroke-width="1"/>
<rect x="717.5" y="446.5" width="8" height="9" fill="none" stroke="#ff0000" stroke-width="1"/>
<rect x="400" y="471" width="174" height="1" fill="#00ffff"/><rect x="429" y="472" width="31" height="1" fill="#00ffff"/>
</svg>
<svg width="724" height="540">
<circle cx="96" cy="12.8" r="6" fill="#7a7a7a"/>
<polyline points="93,11.6 96,14.6 99,11.6" fill="none" stroke="#1c1c1c" stroke-width="1"/>
<circle cx="7" cy="327" r="6" fill="#7a7a7a"/>
<polyline points="4,325.6 7,328.6 10,325.6" fill="none" stroke="#1c1c1c" stroke-width="1"/>
</svg>
<svg width="724" height="540" shape-rendering="crispEdges">
<rect x="695" y="304" width="13" height="13" fill="#8c0000"/><rect x="706" y="304" width="2" height="1" fill="#04040e"/>
<g fill="#d8d8d8"><rect x="721" y="300" width="2" height="3"/><rect x="723" y="299" width="1" height="1"/><rect x="723" y="302" width="1" height="1"/><rect x="723" y="304" width="1" height="1"/></g>
<rect x="697" y="305" width="1" height="1" fill="#fff"/><rect x="701" y="305" width="1" height="1" fill="#fff"/><rect x="705" y="305" width="1" height="1" fill="#fff"/><rect x="697" y="306" width="1" height="1" fill="#fff"/><rect x="702" y="306" width="1" height="1" fill="#fff"/><rect x="704" y="306" width="1" height="1" fill="#fff"/><rect x="697" y="307" width="1" height="1" fill="#fff"/><rect x="701" y="307" width="1" height="1" fill="#fff"/><rect x="702" y="307" width="1" height="1" fill="#fff"/><rect x="703" y="307" width="1" height="1" fill="#fff"/><rect x="704" y="307" width="1" height="1" fill="#fff"/><rect x="705" y="307" width="1" height="1" fill="#fff"/><rect x="706" y="307" width="1" height="1" fill="#fff"/><rect x="696" y="308" width="1" height="1" fill="#fff"/><rect x="697" y="308" width="1" height="1" fill="#fff"/><rect x="698" y="308" width="1" height="1" fill="#fff"/><rect x="701" y="308" width="1" height="1" fill="#fff"/><rect x="703" y="308" width="1" height="1" fill="#fff"/><rect x="706" y="308" width="1" height="1" fill="#fff"/><rect x="697" y="309" width="1" height="1" fill="#fff"/><rect x="701" y="309" width="1" height="1" fill="#fff"/><rect x="702" y="309" width="1" height="1" fill="#fff"/><rect x="703" y="309" width="1" height="1" fill="#fff"/><rect x="704" y="309" width="1" height="1" fill="#fff"/><rect x="706" y="309" width="1" height="1" fill="#fff"/><rect x="697" y="310" width="1" height="1" fill="#fff"/><rect x="701" y="310" width="1" height="1" fill="#fff"/><rect x="703" y="310" width="1" height="1" fill="#fff"/><rect x="706" y="310" width="1" height="1" fill="#fff"/><rect x="697" y="311" width="1" height="1" fill="#fff"/><rect x="699" y="311" width="1" height="1" fill="#fff"/><rect x="701" y="311" width="1" height="1" fill="#fff"/><rect x="702" y="311" width="1" height="1" fill="#fff"/><rect x="703" y="311" width="1" height="1" fill="#fff"/><rect x="704" y="311" width="1" height="1" fill="#fff"/><rect x="705" y="311" width="1" height="1" fill="#fff"/><rect x="706" y="311" width="1" height="1" fill="#fff"/><rect x="697" y="312" width="1" height="1" fill="#fff"/><rect x="699" y="312" width="1" height="1" fill="#fff"/><rect x="701" y="312" width="1" height="1" fill="#fff"/><rect x="705" y="312" width="1" height="1" fill="#fff"/><rect x="696" y="313" width="1" height="1" fill="#fff"/><rect x="697" y="313" width="1" height="1" fill="#fff"/><rect x="698" y="313" width="1" height="1" fill="#fff"/><rect x="699" y="313" width="1" height="1" fill="#fff"/><rect x="701" y="313" width="1" height="1" fill="#fff"/><rect x="702" y="313" width="1" height="1" fill="#fff"/><rect x="703" y="313" width="1" height="1" fill="#fff"/><rect x="704" y="313" width="1" height="1" fill="#fff"/><rect x="705" y="313" width="1" height="1" fill="#fff"/><rect x="701" y="314" width="1" height="1" fill="#fff"/><rect x="705" y="314" width="1" height="1" fill="#fff"/><rect x="701" y="315" width="1" height="1" fill="#fff"/><rect x="702" y="315" width="1" height="1" fill="#fff"/><rect x="703" y="315" width="1" height="1" fill="#fff"/><rect x="704" y="315" width="1" height="1" fill="#fff"/><rect x="705" y="315" width="1" height="1" fill="#fff"/>
<g fill="#ff7800">
<rect x="416" y="459" width="11" height="1"/>
<rect x="410" y="461" width="8" height="1"/>
<rect x="410" y="461" width="1" height="3"/>
<rect x="423" y="459" width="1" height="6"/>
<rect x="422" y="464" width="5" height="1"/>
<rect x="424" y="466" width="1" height="1"/><rect x="425" y="467" width="1" height="1"/><rect x="426" y="468" width="1" height="1"/><rect x="427" y="469" width="1" height="1"/>
</g>
</svg>
<svg width="724" height="540">
<defs><radialGradient id="eg" cx="0.45" cy="0.4" r="0.6"><stop offset="0" stop-color="#ffd84a"/><stop offset="1" stop-color="#e0a800"/></radialGradient></defs>
<circle cx="416" cy="469" r="7" fill="url(#eg)"/>
<rect x="412.5" y="466" width="2" height="2" fill="#2a2000"/>
<rect x="418.5" y="466" width="2" height="2" fill="#2a2000"/>
<path d="M413,474.5 Q416.5,470 420,474.5" fill="none" stroke="#2a2000" stroke-width="1.3"/>
</svg>
<div class="t" style="left:2px;top:5px;color:#e8e8e8;font-size:12px;letter-spacing:0.25px">思创医惠(日线)</div>

<div class="t" style="left:106px;top:6px;color:#f0f0f0">MA5: 4.75</div>
<div class="t" style="left:169px;top:6px;color:#ffff00">MA10: 4.58</div>
<div class="t" style="left:239px;top:6px;color:#ff00ff">MA20: 4.09</div>
<div class="t" style="left:309px;top:6px;color:#00ff00">MA60: 3.69</div>
<div class="t" style="left:379px;top:6px;color:#c8c8c8">MA120: 3.78</div>
<div class="t" style="left:456px;top:6px;color:#0000ff">MA250: 3.71</div>

<div class="t" style="left:16px;top:320px;color:#e8e8e8;font-size:12px;letter-spacing:0.4px">追踪庄家踪迹</div>
<div class="t" style="left:93px;top:320px;color:#f0f0f0;font-size:12px">:</div>
<div class="t" style="left:101px;top:320px;color:#f0f0f0">0.00</div>
<div class="t" style="left:130px;top:320px;color:#ffff00;font-size:12px">:</div>
<div class="t" style="left:137px;top:320px;color:#ffff00">0.93</div>
<div class="t" style="left:166px;top:320px;color:#ff00ff;font-size:12px">:</div>
<div class="t" style="left:172px;top:320px;color:#ff00ff">0.00</div>
<div class="t" style="left:202px;top:320px;color:#00ff00;font-size:12px">:</div>
<div class="t" style="left:209px;top:320px;color:#00ff00">0.00</div>
</body></html>
